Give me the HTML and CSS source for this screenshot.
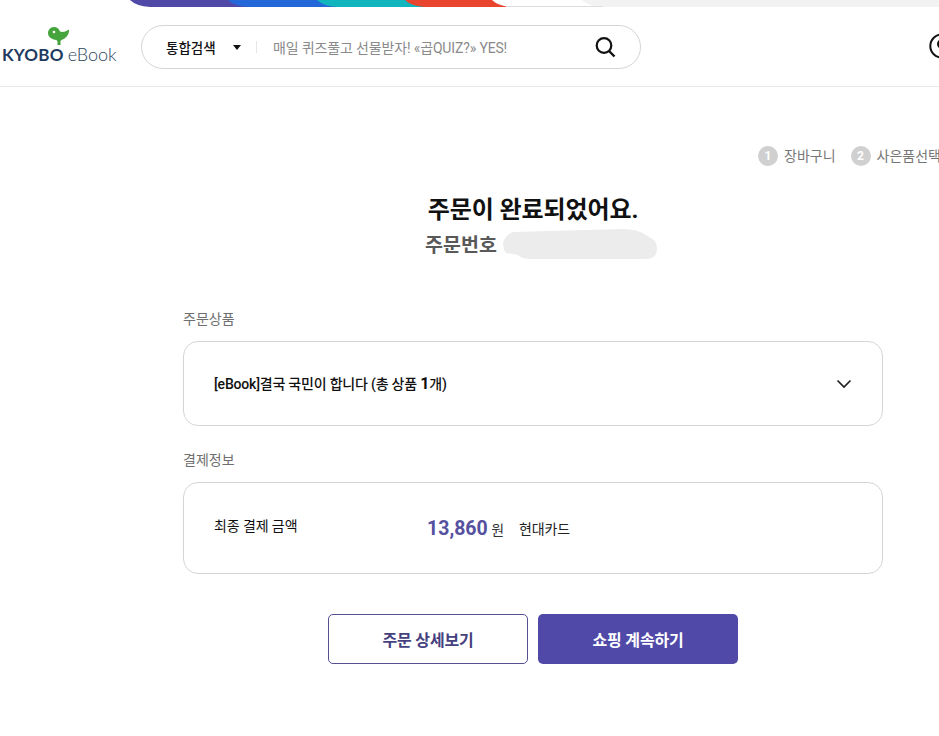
FILE: index.html
```html
<!DOCTYPE html>
<html lang="ko">
<head>
<meta charset="utf-8">
<title>주문 완료</title>
<link rel="stylesheet" href="styles.css">
</head>
<body>
<div class="gnb-strip">
  <svg class="strip-art" width="939" height="7" viewBox="0 0 939 7" aria-hidden="true">
    <path d="M130 0q6 6 20 7H939V0z" fill="#5049a8"/>
    <path d="M228 0q6 6 20 7H939V0z" fill="#2467d8"/>
    <path d="M317 0q6 6 20 7H939V0z" fill="#11b5bd"/>
    <path d="M405 0q6 6 20 7H939V0z" fill="#e8442e"/>
    <path d="M492 0q6 6 20 7H939V0z" fill="#ffffff"/>
    <path d="M582 0q6 6 20 7H939V0z" fill="#f2f2f2"/>
    <rect x="506" y="6" width="96" height="1" fill="#dddddd"/>
  </svg>
</div>
<header class="site-header">
  <a class="logo">
    <svg class="logo-mark" width="22" height="18" viewBox="0 0 22 18" aria-hidden="true">
      <path d="M0 6c0-3 2.500-6 6-6 3 0 5 2 6 4.500 2.500 1 5 .5 9-2 .5 5-3 9-7.500 10.500l-1 1V18h-3v-3.500l-1-1.500C3.500 12.500 0 10 0 6z" fill="#45a53c"/>
      <circle cx="6" cy="5" r="1.300" fill="#fff"/>
    </svg>
    <span class="logo-text"><b>KYOBO</b><span class="logo-ebook">eBook</span></span>
  </a>
  <form class="search">
    <span class="search-scope">통합검색</span>
    <span class="caret"></span>
    <span class="search-divider"></span>
    <span class="search-hint">매일 퀴즈풀고 선물받자! «곱QUIZ?» YES!</span>
    <svg class="search-icon" width="22" height="22" viewBox="0 0 22 22" aria-hidden="true">
      <circle cx="10" cy="9.500" r="7.300" fill="none" stroke="#111" stroke-width="2.200"/>
      <path d="M15 15l5.500 5.500" stroke="#111" stroke-width="2.400" fill="none"/>
    </svg>
  </form>
  <svg class="user-icon" width="26" height="26" viewBox="0 0 26 26" aria-hidden="true">
    <circle cx="13" cy="13" r="11.700" fill="none" stroke="#111" stroke-width="2"/>
    <circle cx="13" cy="11" r="4" fill="none" stroke="#111" stroke-width="2"/>
  </svg>
</header>
<main class="page">
  <ol class="steps">
    <li class="step"><span class="step-num">1</span>장바구니</li>
    <li class="step"><span class="step-num">2</span>사은품선택</li>
  </ol>
  <section class="done">
    <h1 class="done-title">주문이 완료되었어요.</h1>
    <p class="done-order">주문번호
      <svg class="order-blur" width="154" height="30" viewBox="0 0 154 30" aria-hidden="true">
        <path d="M0 14q2-8 10-11L119 0q16 0 24 6l9 6q2 4 2 8 0 10-12 10H27q-8 0-12-4L3 24q-3-4-3-10z" fill="#ececec"/>
      </svg>
    </p>
  </section>
  <section class="block">
    <h2 class="block-label">주문상품</h2>
    <div class="card card-product">
      <span class="product-name">[eBook]결국 국민이 합니다 (총 상품 <b>1</b>개)</span>
      <svg class="chevron" width="16" height="10" viewBox="0 0 16 10" aria-hidden="true">
        <path d="M1.500 1.500L8 8l6.500-6.500" fill="none" stroke="#222" stroke-width="1.700"/>
      </svg>
    </div>
  </section>
  <section class="block block-pay">
    <h2 class="block-label">결제정보</h2>
    <div class="card card-pay">
      <span class="pay-label">최종 결제 금액</span>
      <span class="pay-amount"><b>13,860</b> 원</span>
      <span class="pay-method">현대카드</span>
    </div>
  </section>
  <div class="actions">
    <a class="btn btn-line">주문 상세보기</a>
    <a class="btn btn-fill">쇼핑 계속하기</a>
  </div>
</main>
</body>
</html>
```

FILE: styles.css
```css
* { box-sizing: border-box; }
html, body { margin: 0; padding: 0; }
body {
  width: 939px;
  height: 736px;
  overflow: hidden;
  background: #fff;
  color: #111;
  font-family: Roboto, "Noto Sans CJK KR", sans-serif;
}
.gnb-strip { height: 7px; }
.strip-art { display: block; }
.site-header {
  display: flex;
  align-items: center;
  height: 80px;
  padding-bottom: 1px;
  border-bottom: 1px solid #e8e8e8;
  position: relative;
}
.logo {
  position: relative;
  width: 141px;
  height: 40px;
  flex: none;
}
.logo-mark { position: absolute; left: 48px; top: 1px; }
.logo-text {
  position: absolute;
  left: 2px;
  top: 16px;
  display: flex;
  align-items: baseline;
  line-height: 24px;
  white-space: nowrap;
}
.logo-text b {
  font-family: Lato, sans-serif;
  font-weight: 700;
  font-size: 17px;
  letter-spacing: 0.200px;
  color: #1f3a5f;
}
.logo-ebook {
  font-family: Lato, sans-serif;
  font-weight: 300;
  font-size: 18px;
  margin-left: 4px;
  color: #2c4660;
}
.search {
  display: flex;
  align-items: center;
  width: 500px;
  height: 44px;
  margin-top: 2px;
  border: 1px solid #d5d5d5;
  border-radius: 22px;
  padding-left: 24px;
  flex: none;
}
.search-scope { font-size: 13.500px; font-weight: 500; color: #111; width: 52px; }
.caret {
  margin-left: 15px;
  width: 0;
  height: 0;
  border-left: 4px solid transparent;
  border-right: 4px solid transparent;
  border-top: 5px solid #111;
}
.search-divider {
  width: 1px;
  height: 12px;
  background: #e5e5e5;
  margin-left: 15px;
}
.search-hint {
  margin-left: 16px;
  font-size: 14px;
  letter-spacing: -0.150px;
  color: #8a8a8a;
  width: 321px;
  white-space: nowrap;
}
.search-icon { flex: none; }
.user-icon { position: absolute; left: 929px; top: 26px; }
.page { position: relative; padding: 58px 56px 0 183px; }
.steps {
  list-style: none;
  margin: 0;
  padding: 0;
  display: flex;
  gap: 15px;
  position: absolute;
  left: 758px;
  top: 59px;
  white-space: nowrap;
}
.step {
  display: flex;
  align-items: center;
  gap: 6px;
  font-size: 14px;
  line-height: 20px;
  color: #777;
}
.step-num {
  width: 20px;
  height: 20px;
  border-radius: 50%;
  background: #d0d0d0;
  color: #fff;
  font-size: 12px;
  font-weight: 700;
  text-align: center;
  line-height: 20px;
}
.done { height: 164px; text-align: center; padding-top: 50px; }
.done-title {
  margin: 0;
  font-size: 24px;
  line-height: 30px;
  font-weight: 700;
  letter-spacing: -0.100px;
  color: #111;
}
.done-order {
  margin: 4px 0 0;
  font-size: 19.500px;
  line-height: 28px;
  font-weight: 700;
  color: #595959;
  display: flex;
  justify-content: center;
  align-items: center;
  gap: 6px;
  padding-left: 16px;
}
.order-blur { display: block; flex: none; margin-bottom: 4px; }
.block-label {
  margin: 0;
  font-size: 14px;
  line-height: 20px;
  font-weight: 400;
  color: #6f6f6f;
}
.card {
  margin-top: 12px;
  border: 1px solid #d5d5d5;
  border-radius: 15px;
  width: 700px;
  display: flex;
  align-items: center;
  padding: 0 30px;
}
.card-product { height: 85px; justify-content: space-between; }
.product-name { font-size: 14px; letter-spacing: -0.200px; font-weight: 500; color: #111; padding-bottom: 2px; }
.product-name b { font-size: 16px; font-weight: 700; }
.block-pay { margin-top: 24px; }
.card-pay { height: 92px; }
.pay-label { font-size: 14px; font-weight: 400; letter-spacing: -0.100px; width: 213px; color: #111; padding-bottom: 6px; }
.pay-amount { font-size: 14px; color: #333; width: 92px; }
.pay-amount b { font-size: 19.500px; font-weight: 700; color: #55519f; }
.pay-method { font-size: 14px; letter-spacing: -0.100px; color: #222; }
.actions {
  display: flex;
  gap: 10px;
  margin-top: 40px;
  padding-left: 145px;
}
.btn {
  display: flex;
  align-items: center;
  justify-content: center;
  width: 200px;
  height: 50px;
  border-radius: 5px;
  font-size: 16px;
  font-weight: 700;
  letter-spacing: -0.150px;
}
.btn-line { border: 1px solid #55508f; color: #45417f; background: #fff; }
.btn-fill { background: #5049a8; color: #fff; }
```
